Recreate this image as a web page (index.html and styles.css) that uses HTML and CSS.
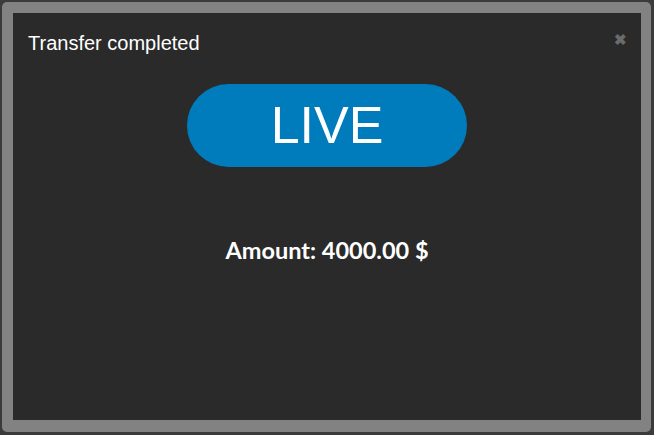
FILE: index.html
```html
<!DOCTYPE html>
<html lang="en">
<head>
  <meta charset="UTF-8" />
  <meta name="viewport" content="width=device-width, initial-scale=1.0"/>
  <title>Transfer completed</title>
  <link rel="stylesheet" href="styles.css">
</head>
<body>

  <div class="modal-frame">
    <div class="modal">
      <div class="modal-header">
        <h3>Transfer completed</h3>
        <span class="close">&#10006;</span>
      </div>
      <div class="modal-body">
        <div class="badge-live">LIVE</div>
        <p class="amount">Amount: 4000.00 $</p>
      </div>
    </div>
  </div>

</body>
</html>
```

FILE: styles.css
```css
html, body {
  margin: 0;
  padding: 0;
}

body {
  background-color: #3b3b3b;
  width: 654px;
  height: 435px;
  overflow: hidden;
  font-family: 'Liberation Sans', Arial, sans-serif;
}

.modal-frame {
  margin: 2px 3px 0 2px;
  height: 430px;
  box-sizing: border-box;
  padding: 11px 10px 12px 11px;
  background-color: #828282;
  border-radius: 5px;
}

.modal {
  background-color: #2a2a2a;
  height: 100%;
  display: flex;
  flex-direction: column;
}

.modal-header {
  display: flex;
  justify-content: space-between;
  align-items: flex-start;
  padding: 18px 14px 0 15px;
}

.modal-header h3 {
  margin: 0;
  color: #fff;
  font-size: 20px;
  font-weight: normal;
  line-height: 24px;
}

.close {
  color: #6b6b6b;
  font-size: 15px;
  font-weight: bold;
  line-height: 16px;
  margin-top: 1px;
}

.modal-body {
  display: flex;
  flex-direction: column;
  align-items: center;
}

.badge-live {
  margin-top: 29px;
  width: 280px;
  height: 83px;
  border-radius: 42px;
  background-color: #007bbb;
  color: #fff;
  font-size: 52px;
  line-height: 83px;
  text-align: center;
}

.amount {
  margin: 69px 0 0 0;
  color: #fff;
  font-family: Lato, 'Open Sans', sans-serif;
  font-weight: bold;
  font-size: 23.5px;
  line-height: 28px;
}
```
